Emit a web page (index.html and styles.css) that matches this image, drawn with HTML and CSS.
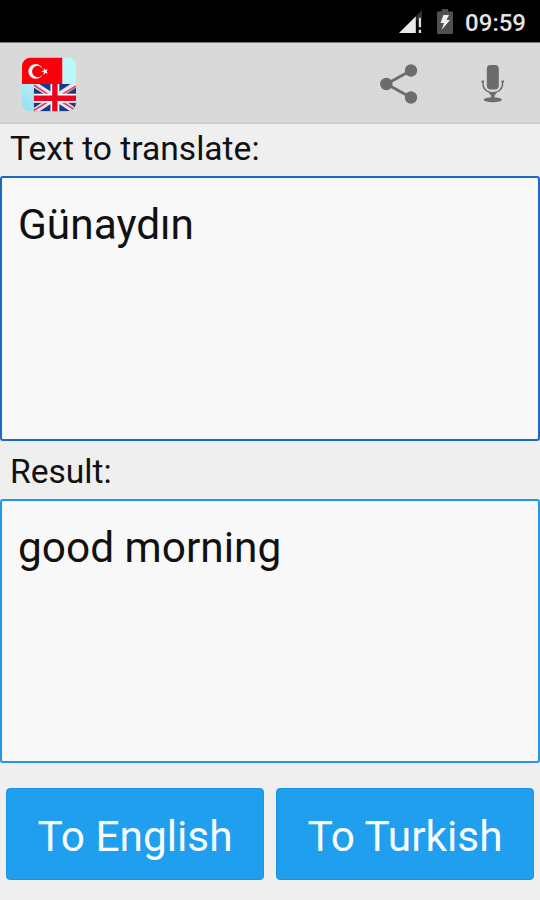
FILE: index.html
```html
<!DOCTYPE html>
<html lang="en">
<head>
    <meta charset="UTF-8">
    <meta name="viewport" content="width=device-width, initial-scale=1.0">
    <title>Turkish - English Translator</title>
    <link rel="stylesheet" href="styles.css">
</head>
<body>

<div class="status-bar">
    <svg class="signal" width="25" height="25" viewBox="0 0 26 26">
        <path d="M24 1 V9 H19.500 V12 H18 V7 Z" fill="#333"/>
        <path d="M0 25 L17.500 7.500 V25 Z" fill="#e8e8e8"/>
        <path d="M20.500 9 H23 V19 H20.500 Z M20.500 21.500 H23 V25 H20.500 Z" fill="#ddd"/>
    </svg>
    <svg class="battery" width="16" height="25" viewBox="0 0 16 25">
        <path d="M5 0 H11 V2.500 H15 Q16 2.500 16 3.500 V24 Q16 25 15 25 H1 Q0 25 0 24 V3.500 Q0 2.500 1 2.500 H5 Z" fill="#505050"/>
        <path d="M6.500 6 H12 L9.500 11 H13 L4.500 21 L7 14 H3.500 Z" fill="#f0f0f0"/>
    </svg>
    <span class="clock">09:59</span>
</div>

<div class="action-bar">
    <svg class="logo" width="54" height="55" viewBox="0 0 55 55">
        <defs>
            <linearGradient id="sky" x1="1" y1="0" x2="0" y2="1">
                <stop offset="0" stop-color="#b5fafa"/>
                <stop offset="0.5" stop-color="#c8f4f6"/>
                <stop offset="1" stop-color="#8fe0f0"/>
            </linearGradient>
            <clipPath id="tile"><rect width="55" height="55" rx="9"/></clipPath>
            <clipPath id="uk"><rect x="12" y="27" width="43" height="28"/></clipPath>
        </defs>
        <g clip-path="url(#tile)">
            <rect width="55" height="55" fill="url(#sky)"/>
            <rect width="41" height="27" fill="#f9000b"/>
            <circle cx="14" cy="14.200" r="7.500" fill="#fff"/>
            <circle cx="16" cy="14.200" r="5.800" fill="#f9000b"/>
            <path d="M19.600 14.200 L22.200 13.300 L22.200 10.600 L23.900 12.800 L26.400 11.900 L24.900 14.200 L26.400 16.500 L23.900 15.600 L22.200 17.800 L22.200 15.100 Z" fill="#fff"/>
            <g clip-path="url(#uk)">
                <rect x="12" y="27" width="43" height="28" fill="#173a8e"/>
                <path d="M12 27 L55 55 M55 27 L12 55" stroke="#e8e4f0" stroke-width="6"/>
                <path d="M12 28 L33 42 M55 29 L34 42 M12 54 L33 41 M55 54 L34 41" stroke="#e04558" stroke-width="1.800"/>
                <path d="M33.500 27 V55 M12 41.500 H55" stroke="#fff" stroke-width="9"/>
                <path d="M33.500 27 V55 M12 41.500 H55" stroke="#f0001c" stroke-width="5.500"/>
            </g>
        </g>
    </svg>
    <svg class="share" width="38" height="40" viewBox="0 0 38 40">
        <path d="M31 6.500 L6.500 20 L31 33.500" fill="none" stroke="#6c6c6c" stroke-width="2.800"/>
        <circle cx="6.300" cy="20" r="6.200" fill="#6c6c6c"/>
        <circle cx="31" cy="6.500" r="6.200" fill="#6c6c6c"/>
        <circle cx="31" cy="33.500" r="6.200" fill="#6c6c6c"/>
    </svg>
    <svg class="mic" width="24" height="40" viewBox="0 0 24 40">
        <rect x="5.800" y="1" width="12" height="24.500" rx="4" fill="#6c6c6c"/>
        <path d="M2 18 V20 C2 31.500 21.500 31.500 21.500 20 V18" fill="none" stroke="#6c6c6c" stroke-width="1.400"/>
        <path d="M0.500 17.500 H3 M20.500 17.500 H23" stroke="#6c6c6c" stroke-width="2"/>
        <path d="M7.500 28.500 H16 L13.500 31.500 V35 H10 V31.500 Z" fill="#6c6c6c"/>
        <ellipse cx="11.800" cy="35.800" rx="9.200" ry="2.500" fill="#6c6c6c"/>
    </svg>
</div>

<div class="label label-source">Text to translate:</div>
<div class="text-box source">Günaydın</div>

<div class="label label-result">Result:</div>
<div class="text-box result">good morning</div>

<div class="buttons">
    <button class="btn">To English</button>
    <button class="btn">To Turkish</button>
</div>

</body>
</html>
```

FILE: styles.css
```css
* {
    box-sizing: border-box;
}

body {
    display: flex;
    flex-direction: column;
    height: 900px;
    margin: 0;
    font-family: Roboto, sans-serif;
    background-color: #efefef;
    color: #111;
    overflow: hidden;
}

svg {
    display: block;
    flex: none;
}

.status-bar {
    display: flex;
    justify-content: flex-end;
    height: 43px;
    padding: 9px 14px 0 0;
    background-color: #000;
    border-bottom: 1px solid #777;
}

.battery {
    margin: 0 12px 0 13px;
}

.clock {
    font-size: 24px;
    font-weight: 500;
    line-height: 28px;
    color: #e4e4e4;
}

.action-bar {
    display: flex;
    height: 81px;
    padding: 14px 35px 0 22px;
    background-color: #d9d9d9;
    border-bottom: 2px solid #cdcdcd;
}

.share {
    margin: 7px 63px 0 auto;
}

.mic {
    margin-top: 7px;
}

.label {
    padding-left: 10px;
    font-size: 33.6px;
    white-space: nowrap;
}

.label-source {
    height: 52px;
    line-height: 50px;
}

.label-result {
    height: 58px;
    line-height: 61px;
}

.text-box {
    height: 265px;
    padding: 22px 16px;
    font-size: 42.4px;
    line-height: 50px;
    background-color: #f8f8f8;
    border: 2px solid #1c69c4;
    border-radius: 3px;
}

.result {
    height: 264px;
    border-color: #2496e6;
}

.buttons {
    display: flex;
    gap: 12px;
    padding: 25px 6px 0;
}

.btn {
    flex: 1;
    height: 92px;
    padding: 4px 0 0;
    font-family: inherit;
    font-size: 42.4px;
    color: #f7fbff;
    background-color: #209fef;
    border: 1px solid #1495e6;
    border-radius: 4px;
}
```
